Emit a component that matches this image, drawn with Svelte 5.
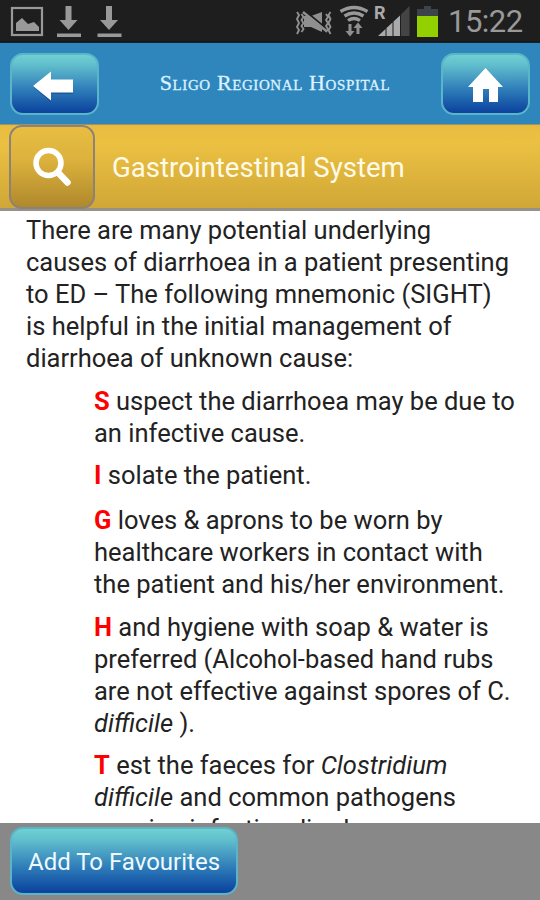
<script>
  const title = "Gastrointestinal System";

  const intro = [
    "There are many potential underlying",
    "causes of diarrhoea in a patient presenting",
    "to ED – The following mnemonic (SIGHT)",
    "is helpful in the initial management of",
    "diarrhoea of unknown cause:",
  ];

  // each line is a list of parts, "em" marks the italic ones
  const steps = [
    {
      letter: "S",
      lines: [
        [{ text: "uspect the diarrhoea may be due to" }],
        [{ text: "an infective cause." }],
      ],
    },
    { letter: "I", lines: [[{ text: "solate the patient." }]] },
    {
      letter: "G",
      lines: [
        [{ text: "loves & aprons to be worn by" }],
        [{ text: "healthcare workers in contact with" }],
        [{ text: "the patient and his/her environment." }],
      ],
    },
    {
      letter: "H",
      lines: [
        [{ text: "and hygiene with soap & water is" }],
        [{ text: "preferred (Alcohol-based hand rubs" }],
        [{ text: "are not effective against spores of C." }],
        [{ text: "difficile", em: true }, { text: " )." }],
      ],
    },
    {
      letter: "T",
      lines: [
        [{ text: "est the faeces for " }, { text: "Clostridium", em: true }],
        [{ text: "difficile", em: true }, { text: " and common pathogens" }],
        [{ text: "causing infective diarrhoea." }],
      ],
    },
  ];
</script>

<div class="screen">
  <div class="status-bar">
    <svg width="130" height="42" viewBox="0 0 130 42" fill="#999">
      <rect x="12" y="8" width="30" height="27" fill="none" stroke="#999" stroke-width="2.2" />
      <path d="M16 31v-8l6-5 6 6 6-2 5 5v4z" />
      <path d="M65.500 6h6v14h6l-9 10-9-10h6zM57 33.500h24v3.500H57z" />
      <path d="M106 6h6v14h6l-9 10-9-10h6zM97.500 33.500h24v3.500h-24z" />
    </svg>
    <svg width="144" height="42" viewBox="295 0 144 42" fill="#8f8f8f">
      <path d="M304 16h7l11-4v20l-11-5h-7z" />
      <path d="M305 11l22 18" stroke="#1d1d1d" stroke-width="2" />
      <path d="M303 12l24 19.500" stroke="#8f8f8f" stroke-width="2.500" />
      <g fill="none" stroke="#8f8f8f" stroke-width="1.900">
        <path d="M297 12l2 3-2 4 2 4-2 4 2 3-2 4M301.500 14l2 3-2 3 2 3-2 3 2 3-2 3M326 14l2 3-2 3 2 3-2 3 2 3-2 3M330.500 12l-2 3 2 4-2 4 2 4-2 3 2 4" />
      </g>
      <g fill="none" stroke="#999" stroke-width="3.300">
        <path d="M340.500 11.500q13.500-8 27 0M344.500 16q9.500-6 19 0M348 20.500q6-4 12 0" />
      </g>
      <path d="M348.500 24h3v7h3l-4.500 5.500-4.500-5.500h3zM356.500 34v-6h-3l4.500-5.500 4.500 5.500h-3v6z" />
      <text class="roaming" x="374" y="19">R</text>
      <path d="M378 36l7.500-7v7zM386.500 28l6-5.500V36h-6zM393.500 21.500l6.500-6V36h-6.500z" fill="#aaa" />
      <path d="M401 14.500l8.500-8.500V36H401z" fill="#444" />
      <path d="M417 9h7V6h7v3h7v8h-21z" fill="#3c434b" />
      <path d="M417 16h21v21h-21z" fill="#92d000" />
    </svg>
    <span class="clock">15:22</span>
  </div>

  <header class="header">
    <button class="glossy" aria-label="Back">
      <svg width="88" height="62" viewBox="0 0 88 62">
        <path d="M23 34l18-15v8h22v14H41v8z" fill="#123d7b" opacity=".5" />
        <path d="M23 33l18-14.500v8h22v13H41v8z" fill="#fff" />
      </svg>
    </button>
    <h1 class="hospital">Sligo Regional Hospital</h1>
    <button class="glossy" aria-label="Home">
      <svg width="88" height="62" viewBox="0 0 88 62">
        <path d="M27 34l17.500-19L62 34h-5v15H48V36h-6v13H32V34z" fill="#fff" />
      </svg>
    </button>
  </header>

  <div class="title-bar">
    <button class="search" aria-label="Search">
      <svg width="82" height="81" viewBox="0 0 82 81" fill="none" stroke="#fff">
        <circle cx="37.500" cy="36" r="12.500" stroke-width="5.500" />
        <path d="M47 45.500l9.500 10" stroke-width="6.500" stroke-linecap="round" />
      </svg>
    </button>
    <h2>{title}</h2>
  </div>

  <main class="content">
    <p>
      {#each intro as line}
        <span class="line">{line}</span>
      {/each}
    </p>
    <div class="steps">
      {#each steps as step}
        <p>
          {#each step.lines as line, i}
            <span class="line">{#if i === 0}<b>{step.letter}</b>{" "}{/if}{#each line as part}{#if part.em}<em>{part.text}</em>{:else}{part.text}{/if}{/each}</span>
          {/each}
        </p>
      {/each}
    </div>
  </main>

  <footer class="footer">
    <button class="glossy favourite">Add To Favourites</button>
  </footer>
</div>

<style>
  :global(body) {
    margin: 0;
    background: #fff;
  }

  .screen {
    display: flex;
    flex-direction: column;
    width: 540px;
    height: 900px;
    overflow: hidden;
    background: #fff;
    font-family: Roboto, "Noto Sans", sans-serif;
  }

  svg {
    display: block;
  }

  button {
    padding: 0;
    font-family: inherit;
  }

  .status-bar {
    display: flex;
    flex: none;
    height: 43px;
    background: linear-gradient(#1e1e1e 41px, #111 42px, #193550);
  }

  .status-bar svg:nth-child(2) {
    margin-left: 165px;
  }

  .roaming {
    font-size: 18px;
    font-weight: 700;
    fill: #aaa;
  }

  .clock {
    margin-left: 9px;
    color: #999;
    font-size: 31px;
    line-height: 43px;
    letter-spacing: -0.5px;
  }

  .header {
    display: flex;
    flex: none;
    align-items: flex-start;
    justify-content: space-between;
    box-sizing: border-box;
    height: 81px;
    padding: 10px 10px 0;
    background: #2f86bd;
  }

  .glossy {
    box-sizing: border-box;
    width: 89px;
    height: 62px;
    border: 2px solid #5bb5c8;
    border-radius: 13px;
    background: linear-gradient(#70d4d2 0%, #62c0cd 18%, #2b78b7 62%, #0c449f 95%, #164f95 100%);
    background-origin: border-box;
    overflow: hidden;
  }

  .glossy svg {
    margin: -2px;
  }

  .hospital {
    margin: 18px 0 0 10px;
    color: #dcf2ff;
    font-family: "Liberation Serif", serif;
    font-size: 22px;
    font-weight: 400;
    font-variant: small-caps;
    line-height: 24px;
    letter-spacing: 0.6px;
    white-space: nowrap;
    -webkit-text-stroke: 0.3px #dcf2ff;
  }

  .title-bar {
    display: flex;
    flex: none;
    box-sizing: border-box;
    height: 87px;
    padding-left: 9px;
    border-top: 1px solid #9a9464;
    border-bottom: 3px solid #96928a;
    background: linear-gradient(#e6bb40, #ecc142 20%, #d0a737);
  }

  .search {
    box-sizing: border-box;
    width: 86px;
    height: 84px;
    border: 2px solid #8c8278;
    border-radius: 13px;
    background: linear-gradient(#e8bd41, #ddb23d 40%, #af892c);
  }

  h2 {
    margin: 0 0 0 17px;
    color: #fffbe8;
    font-size: 27.6px;
    font-weight: 400;
    line-height: 86px;
    white-space: nowrap;
  }

  .content {
    flex: 1;
    min-height: 0;
    padding: 3px 0 0 26px;
    overflow: hidden;
    color: #222;
    font-size: 25.5px;
    line-height: 32px;
  }

  .content p {
    margin: 0 0 11px;
  }

  .line {
    display: block;
    white-space: nowrap;
  }

  .steps {
    padding-left: 68px;
  }

  .steps p:nth-child(1),
  .steps p:nth-child(4) {
    margin-bottom: 10px;
  }

  .steps p:nth-child(2) {
    margin-bottom: 13px;
  }

  b {
    color: #f00;
  }

  .footer {
    flex: none;
    box-sizing: border-box;
    height: 77px;
    padding: 4px 0 0 10px;
    background: #888;
  }

  .favourite {
    width: 228px;
    height: 68px;
    color: #eefaff;
    font-size: 24px;
    line-height: 66px;
  }
</style>
